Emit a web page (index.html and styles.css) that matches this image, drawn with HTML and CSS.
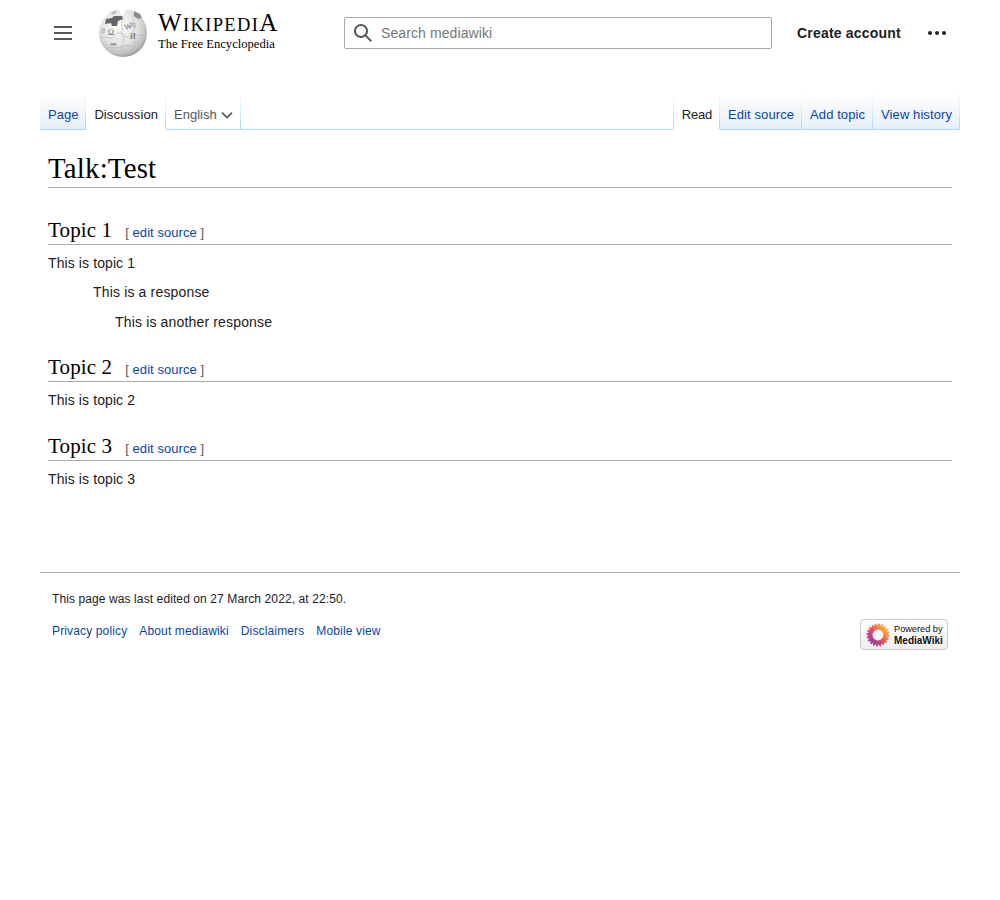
FILE: index.html
```html
<!DOCTYPE html>
<html lang="en">
<head>
<meta charset="utf-8">
<title>Talk:Test - mediawiki</title>
<link rel="stylesheet" href="styles.css">
</head>
<body>
<div class="page">
  <header class="header">
    <button class="menu-btn" aria-label="Main menu">
      <svg width="20" height="20" viewBox="0 0 20 20"><path fill="#54595d" d="M1 3v2h18V3zm0 6v2h18V9zm0 6v2h18v-2z"/></svg>
    </button>
    <a class="logo" href="#">
      <svg class="globe" width="50" height="50" viewBox="0 0 50 50">
        <defs>
          <radialGradient id="g" cx="0.42" cy="0.36" r="0.68">
            <stop offset="0" stop-color="#fafafa"/>
            <stop offset="0.55" stop-color="#e4e4e4"/>
            <stop offset="0.85" stop-color="#bdbdbd"/>
            <stop offset="1" stop-color="#8f8f8f"/>
          </radialGradient>
        </defs>
        <circle cx="25" cy="25" r="24" fill="url(#g)"/>
        <path d="M21 0h7l-1 5-2 3-3-3z" fill="#fff"/>
        <path d="M8 11l6-1 2-2 8 0 1 3-5 2-1 5-5 0-1-3-6 1z" fill="#666"/>
        <path d="M36 3l6 3 2 4-4 1-4-3z" fill="#8a8a8a"/>
        <path d="M13 4l5-2 1 3-5 2zM4 20l3 0 0 5-4 1zM33 14l5 1 0 5-6-1z" fill="#c4c4c4"/>
        <g fill="none" stroke="#b4b4b4" stroke-width=".6">
          <path d="M2 30c6-2 9 1 12 0s4-6 8-5 4 5 9 4 9-3 17-1"/>
          <path d="M24 8c3 4-2 6 0 10s-2 6 0 7 2 8 0 12 2 8 1 11"/>
          <path d="M8 41c5-3 8 0 14-2s9-2 18 1"/>
          <path d="M36 6c-3 7 3 9 0 16s3 9 0 16 1 5 0 6"/>
        </g>
        <text x="10" y="27" class="g1">Ω</text>
        <text x="26" y="21" class="g1" transform="rotate(-15 30 18)">W</text>
        <text x="32" y="31" class="g1">И</text>
        <text x="12" y="38" class="g2">መ</text>
      </svg>
      <span class="wordmark">
        <span class="wm-name">W<small>IKIPEDI</small>A</span>
        <span class="wm-tag">The Free Encyclopedia</span>
      </span>
    </a>
    <form class="search">
      <svg class="search-icon" width="20" height="20" viewBox="0 0 20 20"><path fill="#54595d" d="M12.2 13.6a7 7 0 1 1 1.4-1.4l5.4 5.4-1.4 1.4zM3 8a5 5 0 1 0 10 0A5 5 0 0 0 3 8z"/></svg>
      <span class="search-text">Search mediawiki</span>
    </form>
    <nav class="user-links">
      <a class="create" href="#">Create account</a>
      <button class="more-btn" aria-label="More">
        <svg width="20" height="20" viewBox="0 0 20 20"><circle cx="3" cy="10" r="2"/><circle cx="10" cy="10" r="2"/><circle cx="17" cy="10" r="2"/></svg>
      </button>
    </nav>
  </header>

  <nav class="tabs">
    <ul class="tab-group">
      <li class="tab"><a href="#">Page</a></li>
      <li class="tab selected disc"><a href="#">Discussion</a></li>
      <li class="tab lang"><a href="#">English<svg width="12" height="12" viewBox="0 0 12 12"><path fill="none" stroke="#54595d" stroke-width="1.7" d="M1 3.6l5 5 5-5"/></svg></a></li>
    </ul>
    <div class="tab-fill"></div>
    <ul class="tab-group right">
      <li class="tab selected first"><a href="#">Read</a></li>
      <li class="tab"><a href="#">Edit source</a></li>
      <li class="tab"><a href="#">Add topic</a></li>
      <li class="tab"><a href="#">View history</a></li>
    </ul>
  </nav>

  <main class="content">
    <h1 class="title">Talk:Test</h1>
    <section>
      <h2 class="topic">Topic 1<span class="edit">[ <a href="#">edit source</a> ]</span></h2>
      <p class="para">This is topic 1</p>
      <dl class="reply">
        <dd>This is a response
          <dl class="reply nested"><dd>This is another response</dd></dl>
        </dd>
      </dl>
    </section>
    <section>
      <h2 class="topic">Topic 2<span class="edit">[ <a href="#">edit source</a> ]</span></h2>
      <p class="para">This is topic 2</p>
    </section>
    <section>
      <h2 class="topic">Topic 3<span class="edit">[ <a href="#">edit source</a> ]</span></h2>
      <p class="para">This is topic 3</p>
    </section>
  </main>

  <footer class="footer">
    <p class="edited">This page was last edited on 27 March 2022, at 22:50.</p>
    <div class="foot-row">
      <ul class="foot-links">
        <li><a href="#">Privacy policy</a></li>
        <li><a href="#">About mediawiki</a></li>
        <li><a href="#">Disclaimers</a></li>
        <li><a href="#">Mobile view</a></li>
      </ul>
      <a class="badge" href="#">
        <svg width="24" height="24" viewBox="0 0 26 26">
          <defs>
            <linearGradient id="mw" x1="0.9" y1="0.1" x2="0.1" y2="0.9">
              <stop offset="0" stop-color="#fdb03a"/>
              <stop offset="0.5" stop-color="#ef4e5b"/>
              <stop offset="1" stop-color="#a03f9c"/>
            </linearGradient>
          </defs>
          <circle cx="13" cy="13" r="8.4" fill="none" stroke="url(#mw)" stroke-width="5"/>
          <circle cx="13" cy="13" r="11.2" fill="none" stroke="url(#mw)" stroke-width="2.4" stroke-dasharray="2 1.5"/>
        </svg>
        <span class="badge-text"><span class="b1">Powered by</span><span class="b2">MediaWiki</span></span>
      </a>
    </div>
  </footer>
</div>
</body>
</html>
```

FILE: styles.css
```css
* { box-sizing: border-box; }
html, body { margin: 0; padding: 0; background: #fff; }
body { font-family: "Liberation Sans", Arial, sans-serif; font-size: 14px; color: #202122; }
a { color: #0645ad; text-decoration: none; }
ul { list-style: none; margin: 0; padding: 0; }
button { background: none; border: 0; padding: 0; display: flex; }

.page { padding: 0 40px; }

.header { display: flex; align-items: center; height: 66px; }
.menu-btn { margin-left: 13px; width: 20px; height: 20px; }
.logo { display: flex; align-items: center; margin-left: 25px; width: 246px; color: #000; }
.globe { flex: none; }
.g1, .g2 { font-family: "Liberation Serif", serif; fill: #666; }
.g1 { font-size: 8px; }
.g2 { font-size: 7px; font-family: "DejaVu Sans", sans-serif; }
.wordmark { display: flex; flex-direction: column; margin-left: 10px; margin-top: -4px; color: #000; font-family: "Liberation Serif", serif; }
.wm-name { font-size: 25px; line-height: 24px; letter-spacing: 1.35px; white-space: nowrap; }
.wm-name small { font-size: 18.5px; }
.wm-tag { font-size: 12.6px; line-height: 14px; white-space: nowrap; }

.search { display: flex; align-items: center; width: 428px; height: 32px; border: 1px solid #a2a9b1; border-radius: 2px; padding-left: 8px; }
.search-text { margin-left: 8px; color: #72777d; font-size: 14px; letter-spacing: .1px; }

.user-links { display: flex; align-items: center; margin-left: 25px; }
.create { color: #202122; font-weight: bold; letter-spacing: .2px; }
.more-btn { margin-left: 26px; fill: #202122; }

.tabs { display: flex; margin-top: 28px; height: 36px; }
.tab-group { display: flex; }
.tab-fill { flex: 1; border-bottom: 1px solid #a7d7f9; }
.tab {
  display: flex;
  font-size: 13px;
  line-height: 15px;
  padding-right: 1px;
  border-bottom: 1px solid #a7d7f9;
  background:
    linear-gradient(to bottom, #fff, #a7d7f9) right top / 1px 100% no-repeat,
    linear-gradient(to top, #e6eef7 0, #fff 100%);
}
.tab a { display: flex; align-items: center; gap: 4px; padding: 6px 7px 0 8px; }
.tab.selected {
  border-bottom-color: #fff;
  background: linear-gradient(to bottom, #fff, #a7d7f9) right top / 1px 100% no-repeat, #fff;
}
.tab.selected a { color: #202122; }
.tab.disc a { padding-left: 8px; padding-right: 7px; letter-spacing: .08px; }
.tab.lang { background: linear-gradient(to bottom, #fff, #a7d7f9) right top / 1px 100% no-repeat, #fff; }
.tab.lang a { color: #54595d; }
.tab.first {
  padding-left: 1px;
  background:
    linear-gradient(to bottom, #fff, #a7d7f9) left top / 1px 100% no-repeat,
    linear-gradient(to bottom, #fff, #a7d7f9) right top / 1px 100% no-repeat,
    #fff;
}
.right .tab a { letter-spacing: .09px; }
.right .tab.first a { letter-spacing: -.2px; }

.content { padding: 0 8px; }
.title { margin: 21px 0 0; font-family: "Liberation Serif", serif; font-weight: normal; font-size: 28.8px; line-height: 35px; letter-spacing: .22px; color: #000; border-bottom: 1px solid #a2a9b1; height: 37px; }
.topic { display: flex; align-items: baseline; margin: 0; font-family: "Liberation Serif", serif; font-weight: normal; font-size: 21px; line-height: 27px; letter-spacing: .14px; color: #000; border-bottom: 1px solid #a2a9b1; height: 28px; }
section { padding-top: 21px; }
section:first-of-type { padding-top: 29px; }
section:last-of-type { padding-top: 22px; }
.edit { font-family: "Liberation Sans", Arial, sans-serif; font-size: 13px; letter-spacing: .05px; color: #54595d; margin-left: 13px; }
.para { margin: 7px 0 0; line-height: 22px; height: 22px; letter-spacing: .1px; }
.reply { margin: 7px 0 0; padding: 0; line-height: 22px; letter-spacing: .16px; }
.reply dd { margin: 0 0 0 45px; }
.reply.nested { margin-top: 8px; }
.reply.nested dd { margin-left: 22px; }

.footer { margin-top: 82px; border-top: 1px solid #a2a9b1; padding: 0 12px; font-size: 12px; letter-spacing: .1px; }
.edited { margin: 19px 0 0; line-height: 15px; }
.foot-row { display: flex; justify-content: space-between; margin-top: 12px; }
.foot-links { display: flex; gap: 12px; line-height: 15px; margin-top: 5px; letter-spacing: .14px; }
.badge { display: flex; align-items: center; width: 88px; height: 31px; border: 1px solid #c8ccd1; border-radius: 4px; background: linear-gradient(#fff, #eee); padding-left: 5px; color: #111; letter-spacing: 0; }
.badge-text { display: flex; flex-direction: column; margin-left: 4px; line-height: 11px; }
.b1 { font-size: 9.2px; }
.b2 { font-size: 10px; font-weight: bold; }
```
